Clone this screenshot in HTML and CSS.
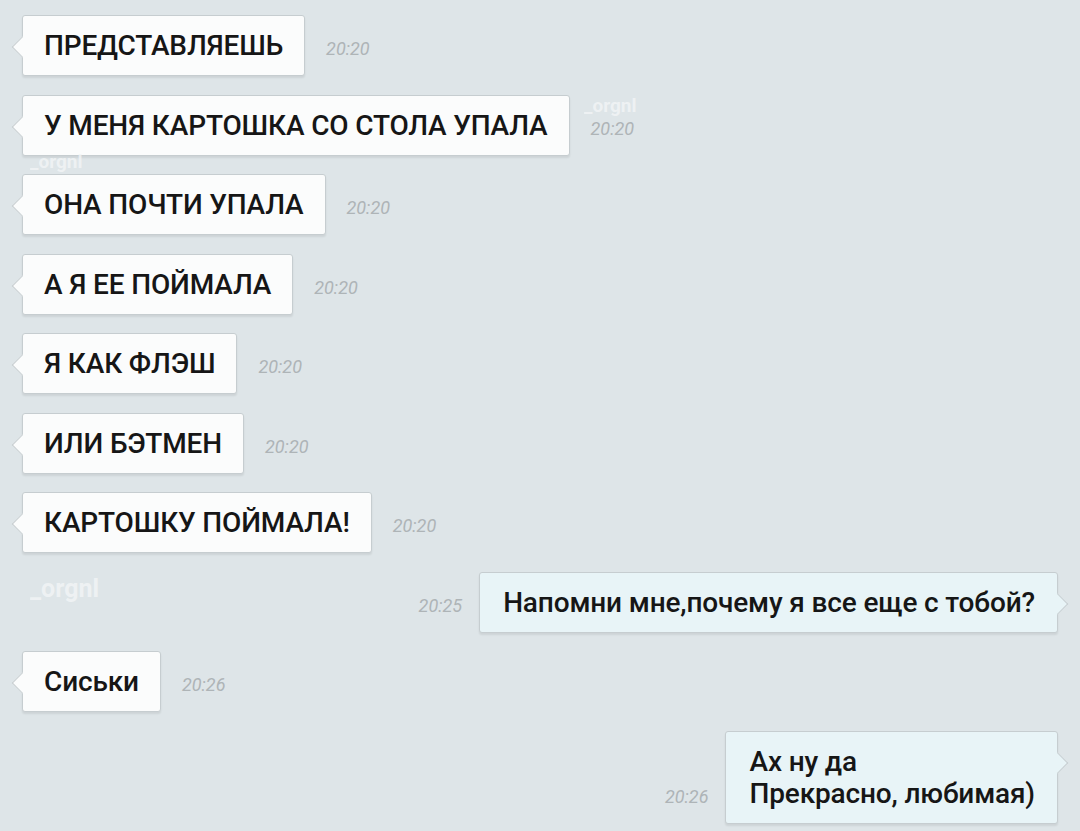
FILE: index.html
```html
<!DOCTYPE html>
<html lang="ru">
<head>
    <meta charset="UTF-8">
    <meta name="viewport" content="width=device-width, initial-scale=1.0">
    <title>Чат</title>
    <link rel="stylesheet" href="styles.css">
</head>
<body>
    <div class="chat">
        <div class="row in">
            <div class="bubble">ПРЕДСТАВЛЯЕШЬ</div>
            <span class="time">20:20</span>
        </div>
        <div class="row in">
            <div class="bubble">У МЕНЯ КАРТОШКА СО СТОЛА УПАЛА</div>
            <span class="time">20:20</span>
        </div>
        <div class="row in">
            <div class="bubble">ОНА ПОЧТИ УПАЛА</div>
            <span class="time">20:20</span>
        </div>
        <div class="row in">
            <div class="bubble">А Я ЕЕ ПОЙМАЛА</div>
            <span class="time">20:20</span>
        </div>
        <div class="row in">
            <div class="bubble">Я КАК ФЛЭШ</div>
            <span class="time">20:20</span>
        </div>
        <div class="row in">
            <div class="bubble">ИЛИ БЭТМЕН</div>
            <span class="time">20:20</span>
        </div>
        <div class="row in">
            <div class="bubble">КАРТОШКУ ПОЙМАЛА!</div>
            <span class="time">20:20</span>
        </div>
        <div class="row out">
            <span class="time">20:25</span>
            <div class="bubble">Напомни мне,почему я все еще с тобой?</div>
        </div>
        <div class="row in">
            <div class="bubble">Сиськи</div>
            <span class="time">20:26</span>
        </div>
        <div class="row out">
            <span class="time">20:26</span>
            <div class="bubble">Ах ну да<br>Прекрасно, любимая)</div>
        </div>
    </div>

    <!-- watermarks -->
    <span class="mark mark-1">_orgnl</span>
    <span class="mark mark-2">_orgnl</span>
    <span class="mark mark-3">_orgnl</span>
</body>
</html>
```

FILE: styles.css
```css
html, body {
    margin: 0;
    height: 100%;
}
body {
    background-color: #dee5e8;
    font-family: Roboto, 'Noto Sans', sans-serif;
    color: #161616;
    overflow: hidden;
    position: relative;
}
.chat {
    display: flex;
    flex-direction: column;
    gap: 18.5px;
    padding: 15px 22px 0 22px;
}
.row {
    display: flex;
    align-items: last baseline;
    gap: 21px;
}
.row.out {
    justify-content: flex-end;
    gap: 17px;
}
.bubble {
    position: relative;
    background-color: #fbfcfc;
    border: 1px solid #c6cdd0;
    border-radius: 3px;
    box-shadow: 0 2px 2px rgba(0,0,0,0.08);
    padding: 13px 21px 13px;
    font-size: 28px;
    font-weight: 500;
    line-height: 33px;
    letter-spacing: -0.15px;
}
.row.out .bubble {
    background-color: #e8f4f7;
    padding: 14px 22px 13px 23px;
    line-height: 32px;
}
/* bubble tail */
.bubble::before {
    content: '';
    position: absolute;
    top: 23px;
    width: 14px;
    height: 14px;
    background: inherit;
    border: 1px solid #c6cdd0;
    transform: rotate(45deg);
}
.row.in .bubble::before {
    left: -8px;
    border-top-color: transparent;
    border-right-color: transparent;
}
.row.out .bubble::before {
    right: -8px;
    border-bottom-color: transparent;
    border-left-color: transparent;
}
.time {
    font-style: italic;
    font-size: 18px;
    color: #aeb4b7;
}
.mark {
    position: absolute;
    color: #f2f5f6;
    font-weight: bold;
    opacity: 0.8;
}
.mark-1 {
    left: 584px;
    top: 94px;
    font-size: 19px;
}
.mark-2 {
    left: 30px;
    top: 150px;
    font-size: 19px;
}
.mark-3 {
    left: 30px;
    top: 574px;
    font-size: 25px;
}
```
